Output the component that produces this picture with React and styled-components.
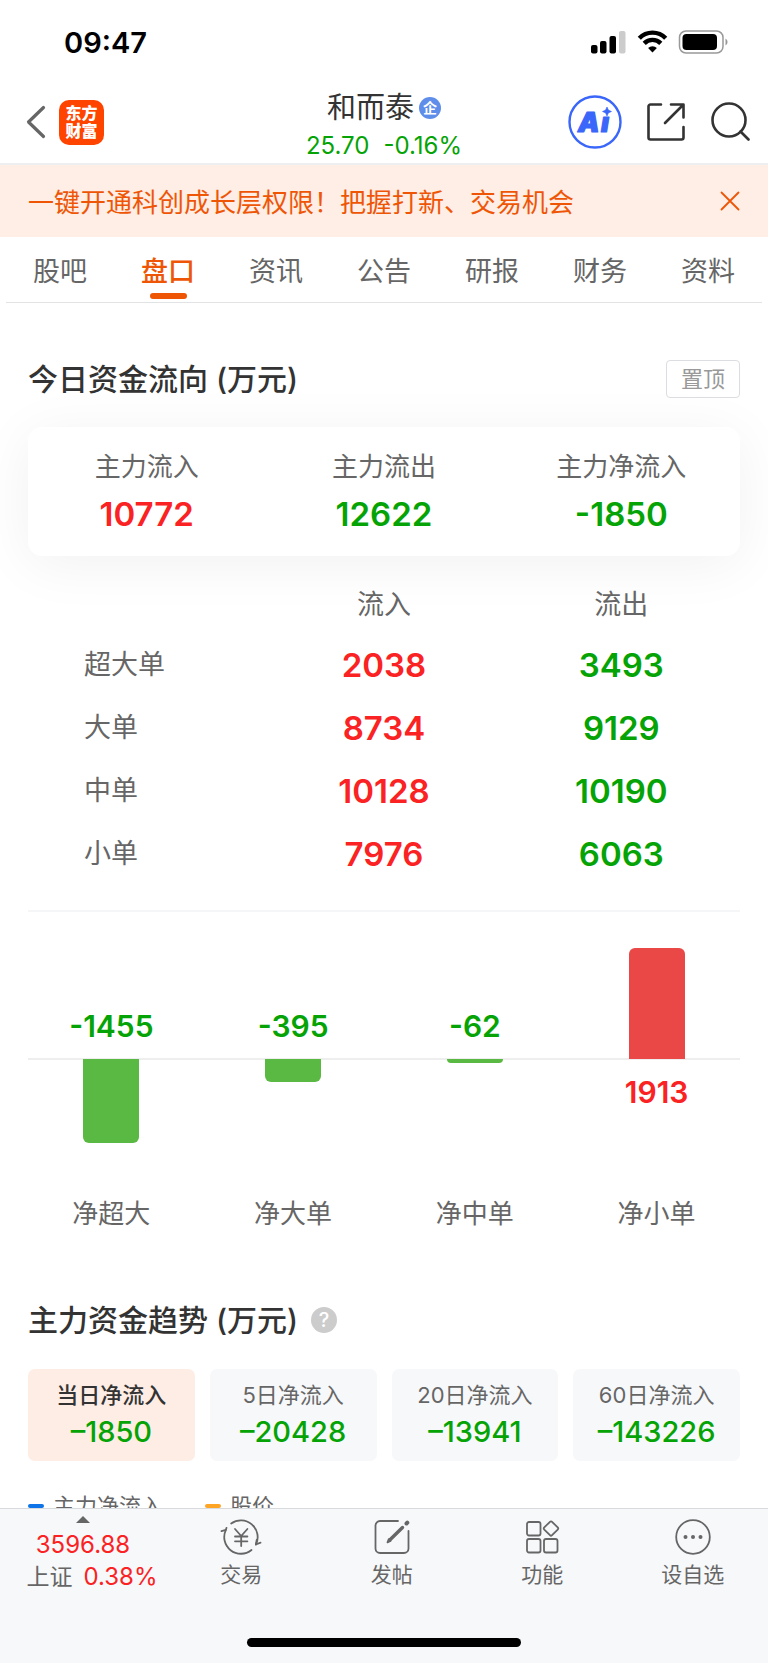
import React from "react";
import styled, { createGlobalStyle } from "styled-components";

const RED = "#fa2222";
const GREEN = "#05a305";
const ORANGE = "#ee5606";
const tone = (v) => (v < 0 ? GREEN : RED);

const GlobalStyle = createGlobalStyle`
  * { box-sizing: border-box; }
  body {
    margin: 0;
    background: #fff;
    color: #333;
    font-family: Inter, "Noto Sans CJK SC", sans-serif;
  }
  button { font: inherit; color: inherit; background: none; border: 0; padding: 0; cursor: pointer; }
  a { color: inherit; text-decoration: none; }
  h1, h2, p { margin: 0; }
  svg { display: block; }
`;

const Shell = styled.div`
  height: 100vh;
  display: flex;
  flex-direction: column;
`;

const StatusBar = styled.div`
  flex: none;
  height: 78px;
  padding: 6px 40px 0 64px;
  display: flex;
  align-items: center;
  justify-content: space-between;
  color: #000;
`;

const Clock = styled.time`
  font-size: 29px;
  font-weight: 600;
`;

const Header = styled.header`
  flex: none;
  height: 87px;
  padding: 3px 18px 0;
  border-bottom: 2px solid #eeeff0;
  display: grid;
  grid-template-columns: 1fr auto 1fr;
  align-items: center;
`;

const HeaderSide = styled.div`
  display: flex;
  align-items: center;
  gap: ${(p) => p.$gap}px;
  padding-left: 8px;
  justify-content: ${(p) => (p.$end ? "flex-end" : "flex-start")};
`;

const Brand = styled.a`
  width: 45px;
  height: 45px;
  border-radius: 10px;
  background: #ff4400;
  color: #fff;
  display: grid;
  align-content: center;
  text-align: center;
  font-size: 16px;
  line-height: 18px;
  font-weight: 900;
`;

const StockTitle = styled.div`
  align-self: end;
  text-align: center;
`;

const StockName = styled.h1`
  display: flex;
  align-items: center;
  justify-content: center;
  gap: 5px;
  font-size: 29px;
  font-weight: 400;
  line-height: 42px;
`;

const CompanyBadge = styled.span`
  width: 22px;
  height: 22px;
  border-radius: 50%;
  background: #5f8eea;
  color: #fff;
  font-size: 14px;
  line-height: 22px;
  font-weight: 700;
`;

const Quote = styled.p`
  display: flex;
  justify-content: center;
  gap: 14px;
  color: ${GREEN};
  font-size: 24px;
  line-height: 34px;
`;

const Main = styled.main`
  flex: 1;
  min-height: 0;
  overflow-y: auto;
  scrollbar-width: none;
`;

const Banner = styled.div`
  height: 72px;
  padding: 0 28px;
  background: #feeee6;
  color: ${ORANGE};
  display: flex;
  align-items: center;
  justify-content: space-between;
  font-size: 26px;
  line-height: 36px;
`;

const BannerLink = styled.a`
  padding-top: 4px;
`;

const Tabs = styled.nav`
  height: 66px;
  margin: 0 6px;
  border-bottom: 1px solid #e2e3e5;
  display: grid;
  grid-template-columns: repeat(7, 1fr);
`;

const Tab = styled.a`
  display: flex;
  flex-direction: column;
  align-items: center;
  justify-content: flex-end;
  gap: 1px;
  padding-bottom: 3px;
  font-size: 27px;
  line-height: 40px;
  font-weight: ${(p) => (p.$active ? 500 : 400)};
  color: ${(p) => (p.$active ? ORANGE : "#666")};

  &::after {
    content: "";
    width: 37px;
    height: 6px;
    border-radius: 3px;
    background: ${(p) => (p.$active ? ORANGE : "transparent")};
  }
`;

const Section = styled.section`
  padding: ${(p) => p.$top}px 28px 0;
`;

const SectionHead = styled.div`
  display: flex;
  align-items: center;
  justify-content: ${(p) => (p.$spread ? "space-between" : "flex-start")};
  gap: 13px;
`;

const Heading = styled.h2`
  font-size: 30px;
  line-height: 38px;
  font-weight: 500;
`;

const PinButton = styled.button`
  && {
    width: 74px;
    height: 38px;
    border: 1px solid #dcdde2;
    border-radius: 4px;
    color: #999;
    font-size: 22px;
    line-height: 32px;
  }
`;

const HelpButton = styled.button`
  && {
    width: 26px;
    height: 26px;
    border-radius: 50%;
    background: #ccc;
    color: #fff;
    font-size: 20px;
    line-height: 26px;
    font-weight: 500;
  }
`;

const SummaryCard = styled.div`
  margin-top: 29px;
  padding: 24px 0 22px;
  border-radius: 14px;
  background: #fff;
  box-shadow: 0 8px 56px rgba(0, 0, 0, 0.06);
  display: grid;
  grid-template-columns: repeat(3, 1fr);
  text-align: center;
`;

const SummaryLabel = styled.p`
  color: #666;
  font-size: 26px;
  line-height: 32px;
`;

const SummaryValue = styled.p`
  margin-top: 11px;
  color: ${(p) => p.$color};
  font-size: 33px;
  line-height: 40px;
  font-weight: 600;
`;

const FlowTable = styled.table`
  width: 100%;
  margin-top: 21px;
  table-layout: fixed;
  border-collapse: collapse;
  color: #666;
  font-size: 27px;
  line-height: 40px;

  th, td { padding: 0; font-weight: 400; text-align: center; height: 63px; }
  thead th, thead td { height: 56px; }
  tbody th { text-align: left; padding-left: 56px; }
`;

const FlowValue = styled.td`
  && {
    color: ${(p) => p.$color};
    font-size: 33px;
    font-weight: 600;
  }
`;

const Chart = styled.div`
  position: relative;
  margin-top: 25px;
  border-top: 2px solid #f5f6f7;
  display: grid;
  grid-template-columns: repeat(4, 1fr);
  gap: 15px;

  &::before {
    content: "";
    position: absolute;
    left: 0;
    right: 0;
    top: 146px;
    height: 2px;
    background: #eee;
  }
`;

const ChartColumn = styled.div`
  position: relative;
  display: flex;
  flex-direction: column;
  align-items: center;
`;

const ChartHalf = styled.div`
  height: ${(p) => (p.$upper ? 147 : 139)}px;
  display: flex;
  flex-direction: column;
  align-items: center;
  justify-content: ${(p) => (p.$upper ? "flex-end" : "flex-start")};
`;

const Bar = styled.div`
  width: 56px;
  border-radius: ${(p) => (p.$up ? "6px 6px 0 0" : "0 0 6px 6px")};
  background: ${(p) => (p.$up ? "#ea4747" : "#5ab943")};
`;

const BarValue = styled.span`
  margin: 15px 0;
  color: ${(p) => p.$color};
  font-size: 30px;
  line-height: 36px;
  font-weight: 600;
`;

const BarLabel = styled.span`
  color: #666;
  font-size: 26px;
  line-height: 32px;
`;

const Tiles = styled.div`
  margin-top: 30px;
  display: grid;
  grid-template-columns: repeat(4, 1fr);
  gap: 15px;
`;

const Tile = styled.button`
  && {
    padding: 11px 0;
    border-radius: 7px;
    background: ${(p) => (p.$active ? "#feede5" : "#f7f8fa")};
    color: ${(p) => (p.$active ? "#333" : "#666")};
    display: grid;
    gap: 4px;
    text-align: center;
  }
`;

const TileLabel = styled.span`
  font-size: 22px;
  line-height: 30px;
  font-weight: ${(p) => (p.$active ? 500 : 400)};
`;

const TileValue = styled.span`
  color: ${GREEN};
  font-size: 29px;
  line-height: 36px;
  font-weight: 500;
`;

const Legend = styled.div`
  margin-top: 30px;
  display: flex;
  gap: 42px;
  color: #666;
  font-size: 22px;
  line-height: 30px;
`;

const LegendItem = styled.span`
  display: flex;
  align-items: center;
  gap: 9px;

  &::before {
    content: "";
    width: 16px;
    height: 4px;
    border-radius: 2px;
    background: ${(p) => p.$color};
  }
`;

const Footer = styled.footer`
  flex: none;
  height: 155px;
  padding-bottom: 16px;
  border-top: 1px solid #d8dadd;
  background: #f7f8fa;
  color: #666;
  display: flex;
  flex-direction: column;
  align-items: center;
  justify-content: space-between;
`;

const FooterBar = styled.div`
  width: 100%;
  display: grid;
  grid-template-columns: 166px repeat(4, 1fr);
`;

const IndexButton = styled.button`
  && {
    padding-top: 7px;
    display: flex;
    flex-direction: column;
    align-items: center;
    font-size: 23px;
    line-height: 32px;
  }

  svg { margin-bottom: 6px; }
`;

const IndexLine = styled.span`
  display: flex;
  gap: 11px;
  padding-left: 18px;
`;

const IndexNumber = styled.span`
  color: ${RED};
  font-size: 24px;
`;

const Action = styled.button`
  && {
    padding-top: 10px;
    display: flex;
    flex-direction: column;
    align-items: center;
    gap: 4px;
    font-size: 21px;
    line-height: 32px;
  }
`;

const HomeIndicator = styled.div`
  width: 274px;
  height: 9px;
  border-radius: 5px;
  background: #000;
`;

const StatusIcons = () => (
  <svg width="138" height="24" viewBox="0 0 138 24" aria-hidden="true">
    <rect x="1" y="15" width="6.500" height="8.500" rx="2" />
    <rect x="10" y="11" width="6.500" height="12.500" rx="2" />
    <rect x="19.500" y="6" width="6.500" height="17.500" rx="2" />
    <rect x="29" y="1" width="6.500" height="22.500" rx="2" fill="#ccc" />
    <g fill="none" stroke="#000" strokeWidth="4.400">
      <path d="M49.300 8.200a18.500 18.500 0 0 1 26.400 0" />
      <path d="M54.200 13.400a11.600 11.600 0 0 1 16.600 0" />
    </g>
    <path d="M62.500 22.500l-4.400-4.600a6.600 6.600 0 0 1 8.800 0z" />
    <rect x="89.500" y="1" width="43.500" height="22" rx="6.500" fill="none" stroke="#999" strokeWidth="1.500" />
    <rect x="92.500" y="4" width="34.500" height="16" rx="4" />
    <path d="M135.500 8.500a4 4 0 0 1 0 7z" fill="#999" />
  </svg>
);

const BackIcon = () => (
  <svg width="20" height="34" viewBox="0 0 20 34" fill="none" stroke="#666" strokeWidth="3.200" strokeLinecap="round" strokeLinejoin="round">
    <path d="M17.500 2.500L2.500 17l15 14.500" />
  </svg>
);

const AiIcon = () => (
  <svg width="54" height="54" viewBox="0 0 54 54">
    <circle cx="27" cy="27" r="25.500" fill="none" stroke="#3a66fa" strokeWidth="2.400" />
    <g fill="#3a66fa" stroke="#3a66fa" strokeWidth="1.200" strokeLinejoin="round" fontFamily="Inter, sans-serif" fontSize="27" fontWeight="900" fontStyle="italic">
      <text x="10" y="37">A</text>
      <text x="33" y="37">ı</text>
    </g>
    <path d="M39 12l1.400 3.100 3.100 1.400-3.100 1.400-1.400 3.100-1.400-3.100-3.100-1.400 3.100-1.400z" fill="#3a66fa" stroke="#3a66fa" strokeWidth=".6" />
  </svg>
);

const ShareIcon = () => (
  <svg width="40" height="40" viewBox="0 0 40 40" fill="none" stroke="#333" strokeWidth="2.600" strokeLinecap="round" strokeLinejoin="round">
    <path d="M15 2.500H4.500a2 2 0 0 0-2 2v31a2 2 0 0 0 2 2h31a2 2 0 0 0 2-2V25" />
    <path d="M25 2.500h12.500V15.500M37 3L19 21" />
  </svg>
);

const SearchIcon = () => (
  <svg width="40" height="40" viewBox="0 0 40 40" fill="none" stroke="#333" strokeWidth="2.600" strokeLinecap="round">
    <circle cx="19" cy="18" r="16.500" />
    <path d="M30.500 29.500l8 8" />
  </svg>
);

const CloseIcon = () => (
  <svg width="20" height="20" viewBox="0 0 20 20" fill="none" stroke={ORANGE} strokeWidth="1.800" strokeLinecap="round">
    <path d="M1.500 1.500l17 17M18.500 1.500l-17 17" />
  </svg>
);

const ArrowUp = () => (
  <svg width="14" height="7" viewBox="0 0 14 7" fill="#666" aria-hidden="true">
    <path d="M7 0l7 7H0z" />
  </svg>
);

const Glyph = ({ children }) => (
  <svg width="42" height="36" viewBox="0 0 42 36" fill="none" stroke="#666" strokeWidth="1.800" strokeLinecap="round" strokeLinejoin="round" aria-hidden="true">
    {children}
  </svg>
);

const TradeIcon = () => (
  <Glyph>
    <path d="M11.200 4.500A16.700 16.700 0 0 1 35.900 25.500l4.600-1.800M31.500 31A16.700 16.700 0 0 1 5.900 10.800l-4.400 1.400" />
    <path d="M35.900 25.500l.8-4.500M5.900 10.800l.6-2" />
    <path d="M15 10l6.200 7 6.200-7M21.200 17v10M15 17.500h12.400M15 22.300h12.400" />
  </Glyph>
);

const PostIcon = () => (
  <Glyph>
    <path d="M27 2H9a4.500 4.500 0 0 0-4.500 4.500v23A4.500 4.500 0 0 0 9 34h24a4.500 4.500 0 0 0 4.500-4.500V12" />
    <path d="M19 20.800L31.500 8.500" strokeWidth="3.400" />
    <path d="M35.500 4.500l.8-.8" strokeWidth="4" />
    <path d="M16.500 23.300l3-1.300-1.800-1.800z" fill="#666" />
  </Glyph>
);

const FeatureIcon = () => (
  <Glyph>
    <rect x="6" y="3" width="13.500" height="13.500" rx="2" />
    <rect x="6" y="20" width="13.500" height="13.500" rx="2" />
    <rect x="23" y="20" width="13.500" height="13.500" rx="2" />
    <rect x="24.500" y="4" width="11" height="11" rx="1.500" transform="rotate(45 30 9.500)" />
  </Glyph>
);

const MoreIcon = () => (
  <Glyph>
    <circle cx="21" cy="18" r="16.800" />
    <g fill="#666" stroke="none">
      <circle cx="13.500" cy="18" r="2" />
      <circle cx="21" cy="18" r="2" />
      <circle cx="28.500" cy="18" r="2" />
    </g>
  </Glyph>
);

const tabs = ["股吧", "盘口", "资讯", "公告", "研报", "财务", "资料"];
const summary = [
  { label: "主力流入", value: "10772", color: RED },
  { label: "主力流出", value: "12622", color: GREEN },
  { label: "主力净流入", value: "-1850", color: GREEN },
];
const flows = [
  ["超大单", 2038, 3493],
  ["大单", 8734, 9129],
  ["中单", 10128, 10190],
  ["小单", 7976, 6063],
];
const nets = [
  ["净超大", -1455],
  ["净大单", -395],
  ["净中单", -62],
  ["净小单", 1913],
];
const periods = [
  ["当日净流入", "–1850"],
  ["5日净流入", "–20428"],
  ["20日净流入", "–13941"],
  ["60日净流入", "–143226"],
];
const actions = [
  ["交易", TradeIcon],
  ["发帖", PostIcon],
  ["功能", FeatureIcon],
  ["设自选", MoreIcon],
];

// Bars share one scale: 58 pixels for every 1000 万元.
const barHeight = (v) => Math.round(Math.abs(v) * 0.058);

function NetColumn({ label, value }) {
  const up = value > 0;
  const bar = <Bar $up={up} style={{ height: barHeight(value) }} />;
  const text = <BarValue $color={tone(value)}>{value}</BarValue>;
  return (
    <ChartColumn>
      <ChartHalf $upper>{up ? bar : text}</ChartHalf>
      <ChartHalf>{up ? text : bar}</ChartHalf>
      <BarLabel>{label}</BarLabel>
    </ChartColumn>
  );
}

export default function App() {
  return (
    <Shell>
      <GlobalStyle />
      <StatusBar>
        <Clock>09:47</Clock>
        <StatusIcons />
      </StatusBar>
      <Header>
        <HeaderSide $gap={13}>
          <button aria-label="返回"><BackIcon /></button>
          <Brand href="#"><span>东方</span><span>财富</span></Brand>
        </HeaderSide>
        <StockTitle>
          <StockName>和而泰<CompanyBadge>企</CompanyBadge></StockName>
          <Quote><span>25.70</span><span>-0.16%</span></Quote>
        </StockTitle>
        <HeaderSide $gap={24} $end>
          <button aria-label="AI"><AiIcon /></button>
          <button aria-label="分享"><ShareIcon /></button>
          <button aria-label="搜索"><SearchIcon /></button>
        </HeaderSide>
      </Header>

      <Main>
        <Banner>
          <BannerLink href="#">一键开通科创成长层权限！把握打新、交易机会</BannerLink>
          <button aria-label="关闭"><CloseIcon /></button>
        </Banner>
        <Tabs>
          {tabs.map((t) => (
            <Tab key={t} href="#" $active={t === "盘口"}>{t}</Tab>
          ))}
        </Tabs>

        <Section $top={57}>
          <SectionHead $spread>
            <Heading>今日资金流向 (万元)</Heading>
            <PinButton>置顶</PinButton>
          </SectionHead>
          <SummaryCard>
            {summary.map((s) => (
              <div key={s.label}>
                <SummaryLabel>{s.label}</SummaryLabel>
                <SummaryValue $color={s.color}>{s.value}</SummaryValue>
              </div>
            ))}
          </SummaryCard>
          <FlowTable>
            <thead>
              <tr><td /><th scope="col">流入</th><th scope="col">流出</th></tr>
            </thead>
            <tbody>
              {flows.map(([name, inflow, outflow]) => (
                <tr key={name}>
                  <th scope="row">{name}</th>
                  <FlowValue $color={RED}>{inflow}</FlowValue>
                  <FlowValue $color={GREEN}>{outflow}</FlowValue>
                </tr>
              ))}
            </tbody>
          </FlowTable>
          <Chart>
            {nets.map(([label, value]) => (
              <NetColumn key={label} label={label} value={value} />
            ))}
          </Chart>
        </Section>

        <Section $top={71}>
          <SectionHead>
            <Heading>主力资金趋势 (万元)</Heading>
            <HelpButton aria-label="说明">?</HelpButton>
          </SectionHead>
          <Tiles>
            {periods.map(([label, value], i) => (
              <Tile key={label} $active={i === 0}>
                <TileLabel $active={i === 0}>{label}</TileLabel>
                <TileValue>{value}</TileValue>
              </Tile>
            ))}
          </Tiles>
          <Legend>
            <LegendItem $color="#0f74e8">主力净流入</LegendItem>
            <LegendItem $color="#ffa526">股价</LegendItem>
          </Legend>
        </Section>
      </Main>

      <Footer>
        <FooterBar>
          <IndexButton>
            <ArrowUp />
            <IndexNumber>3596.88</IndexNumber>
            <IndexLine>上证<IndexNumber>0.38%</IndexNumber></IndexLine>
          </IndexButton>
          {actions.map(([label, Icon]) => (
            <Action key={label}><Icon />{label}</Action>
          ))}
        </FooterBar>
        <HomeIndicator />
      </Footer>
    </Shell>
  );
}
